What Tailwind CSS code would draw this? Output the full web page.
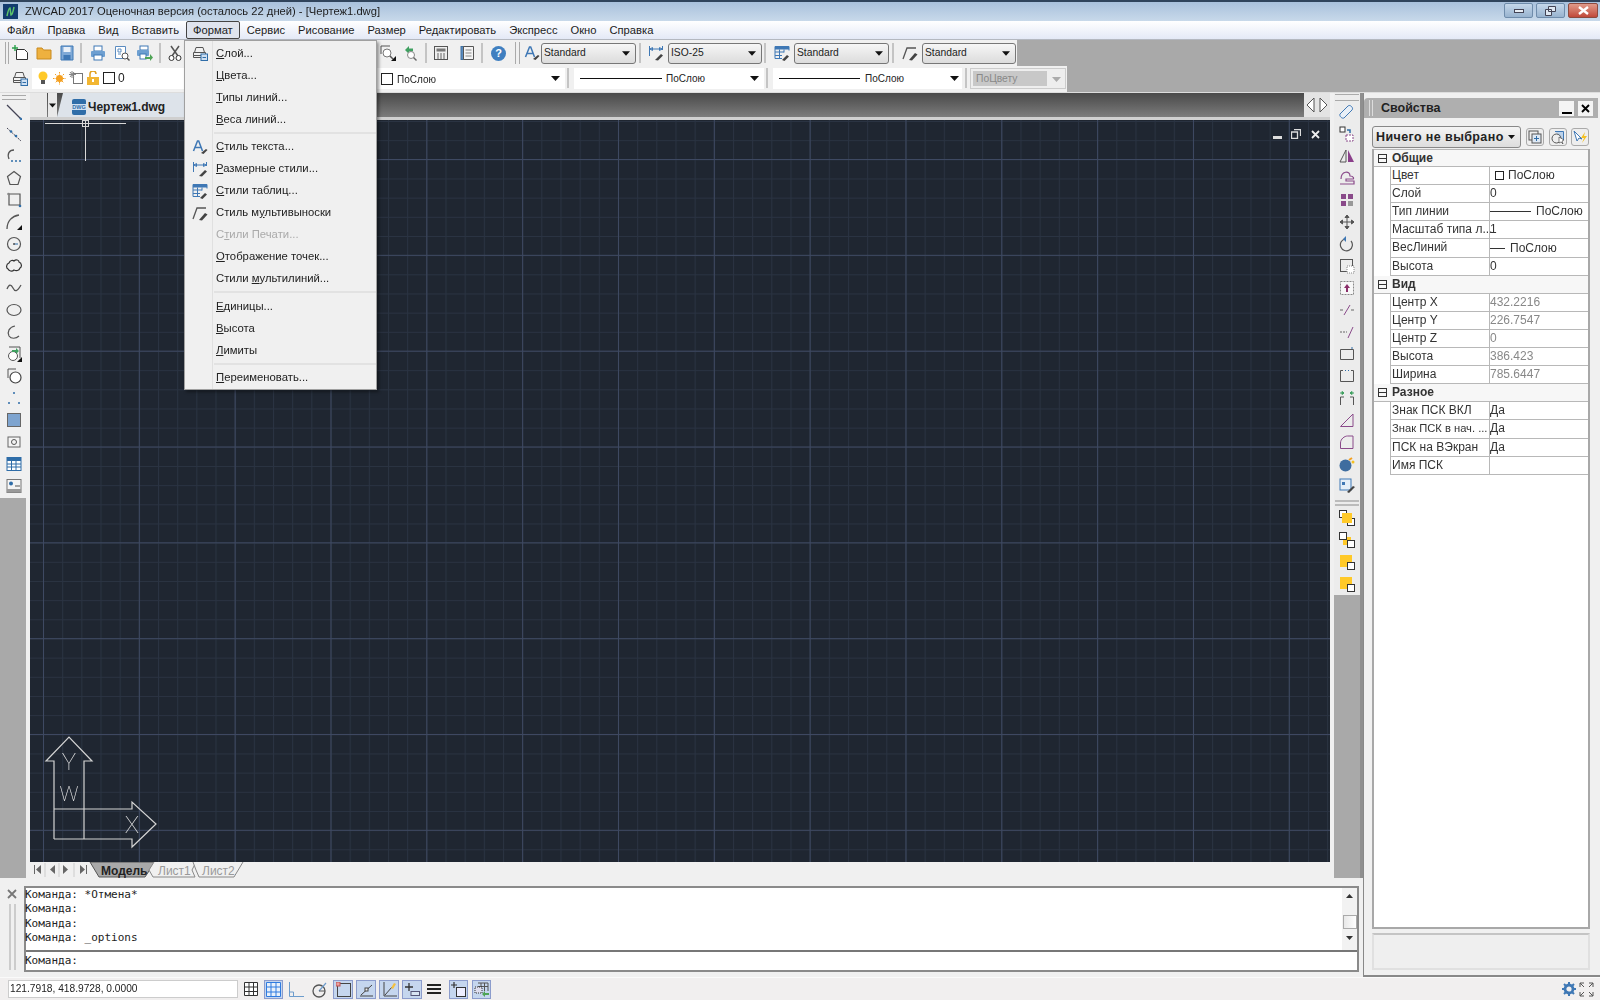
<!DOCTYPE html>
<html lang="ru">
<head>
<meta charset="UTF-8" />
<title>ZWCAD 2017</title>
<script src="https://cdn.jsdelivr.net/npm/@tailwindcss/browser@4"></script>
</head>
<body class="w-[1600px] h-[1000px] overflow-hidden bg-[#f0f0f0] font-['Liberation_Sans',sans-serif] text-[12px] text-[#222] blur-[0.3px]">

<svg class="hidden">
  <symbol id="layer" viewBox="0 0 16 16"><path d="M2.5 7.5 4 2.5h7l1.500 5M1.500 7.500h12v3h-12zM1.500 10.500h12v2h-12z" fill="#f2f2f2" stroke="#555"/><rect x="9" y="9" width="6.500" height="6.500" fill="#cfe0f2" stroke="#2f6da8"/><path d="M10.500 12.500h3.500" stroke="#2f6da8"/></symbol>
  <symbol id="txt" viewBox="0 0 16 16"><path d="M1.500 12 5.500 2h1.200L10.500 12M3 8.500h6" fill="none" stroke="#3f78b5" stroke-width="1.500"/><path d="m9 14 5-4 1.500 1-4 4z" fill="#444"/></symbol>
  <symbol id="dim" viewBox="0 0 16 16"><path d="M1.500 1v10M14.500 1v4M2 4h12M2 4l2.500-1.500v3zM14 4l-2.500-1.500v3z" fill="none" stroke="#3f78b5"/><path d="m7 15 6-6 2 1.500-5 5z" fill="#444"/></symbol>
  <symbol id="tbl" viewBox="0 0 16 16"><rect x="1" y="1.500" width="14" height="3" fill="#3f78b5"/><path d="M1 1.500h14v4M1 1.500v12h7M1 7h9M1 10.500h7M5.500 4.500v9M10 4.500v3" fill="none" stroke="#3f78b5"/><path d="m8 15 5-5 2 1.500-4.500 4.500z" fill="#444"/></symbol>
  <symbol id="mld" viewBox="0 0 16 16"><path d="M1 14 5 3h9" fill="none" stroke="#555" stroke-width="1.300"/><path d="m7 15 6-7 2.500 1.500-5.500 6z" fill="#444"/></symbol>
  <symbol id="down" viewBox="0 0 9 5"><path d="M0 0h9L4.500 5z" fill="#111"/></symbol>
  <symbol id="sq" viewBox="0 0 18 18"><rect x="2.500" y="2.500" width="11" height="11" fill="#ffc928" stroke="#ffc928"/><rect x="9.500" y="9.500" width="7" height="7" fill="#fff" stroke="#333"/></symbol>
</svg>

<!-- Title bar -->
<div class="h-[21px] border-t-2 border-[#30445c] bg-gradient-to-b from-[#a9c1dc] to-[#c8d9ea] flex items-center relative">
  <svg class="ml-[3px] w-[15px] h-[15px]" viewBox="0 0 15 15"><rect width="15" height="15" fill="#123c6e"/><path d="M4 12c1-5 2-8 3-8l1 7c1 0 2-3 3-8" fill="none" stroke="#5cc46a" stroke-width="1.500"/></svg>
  <span class="ml-[7px] text-[11.200px] text-[#1c1c1c]">ZWCAD 2017 Оценочная версия (осталось 22 дней) - [Чертеж1.dwg]</span>
  <div class="ml-auto mr-[2px] mb-[2px] flex gap-[3px]">
    <div class="w-[29px] h-[15px] rounded-[2px] border border-[#6f8cab] bg-gradient-to-b from-[#c5d7ea] to-[#98b3cf] flex items-center justify-center"><div class="w-[10px] h-[4px] bg-[#e8eef5] border border-[#445]"></div></div>
    <div class="w-[29px] h-[15px] rounded-[2px] border border-[#6f8cab] bg-gradient-to-b from-[#c5d7ea] to-[#98b3cf] flex items-center justify-center"><svg class="w-[11px] h-[10px]" viewBox="0 0 11 10"><path d="M3.500.500h7v5h-7zM.500 3.500h6v6h-6z" fill="#dfe8f2" stroke="#445"/></svg></div>
    <div class="w-[30px] h-[15px] rounded-[2px] border border-[#8c4a3e] bg-gradient-to-b from-[#e09a8a] to-[#c0483a] flex items-center justify-center"><svg class="w-[11px] h-[9px]" viewBox="0 0 11 9"><path d="m1 1 9 7M10 1 1 8" stroke="#fff" stroke-width="2.400"/></svg></div>
  </div>
</div>

<!-- Menu bar -->
<div class="h-[19px] bg-gradient-to-b from-white to-[#e4e9f6] flex items-center pl-[1px] text-[11.200px] text-[#1c1c1c] border-b border-[#b4b8c0]">
  <span class="px-[6px]">Файл</span>
  <span class="px-[6px] ml-[1px]">Правка</span>
  <span class="px-[6px] ml-[1px]">Вид</span>
  <span class="px-[6px] ml-[1px]">Вставить</span>
  <span class="px-[6px] ml-[1px] h-[18px] flex items-center rounded-[2px] border border-[#444] bg-[#dfe4ee]">Формат</span>
  <span class="px-[6px] ml-[1px]">Сервис</span>
  <span class="px-[6px] ml-[1px]">Рисование</span>
  <span class="px-[6px] ml-[1px]">Размер</span>
  <span class="px-[6px] ml-[1px]">Редактировать</span>
  <span class="px-[6px] ml-[1px]">Экспресс</span>
  <span class="px-[6px] ml-[1px]">Окно</span>
  <span class="px-[6px] ml-[1px]">Справка</span>
</div>

<!-- Toolbars -->
<div class="h-[53px] bg-[#a9a9a9] border-b border-[#ddd]">
  <div class="h-[26px] w-[1017px] bg-[#f0f0f0] flex items-center text-[10.300px]">
    <div class="ml-[5px] w-[4px] h-[22px] border-x border-[#aaa]"></div>
    <svg class="ml-[3px] w-[16px] h-[16px]" viewBox="0 0 16 16"><path d="M4.500 4.500h8l3 3v7h-11z" fill="#fff" stroke="#333"/><path d="M3 0v6M0 3h6" stroke="#2aa04a" stroke-width="1.400"/></svg>
    <svg class="ml-[8px] w-[16px] h-[16px]" viewBox="0 0 16 16"><path d="M1 3h5l1.500 2H15v9H1z" fill="#eeb13f" stroke="#c98a1f"/></svg>
    <svg class="ml-[8px] w-[14px] h-[16px]" viewBox="0 0 14 16"><path d="M1 1h12v14H1z" fill="#7fa9d6" stroke="#3f78b5"/><rect x="3.500" y="2" width="7" height="5" fill="#e9f0f8"/><rect x="3.500" y="10" width="7" height="5" fill="#3f78b5"/></svg>
    <div class="ml-[6px] w-[2px] h-[20px] bg-[#c4c4c4]"></div>
    <svg class="ml-[8px] w-[16px] h-[16px]" viewBox="0 0 16 16"><rect x="4" y="1" width="8" height="5" fill="#fff" stroke="#3f78b5"/><rect x="1" y="6" width="14" height="6" rx="1" fill="#6d9fd1"/><rect x="4" y="10" width="8" height="5" fill="#fff" stroke="#3f78b5"/></svg>
    <svg class="ml-[8px] w-[16px] h-[16px]" viewBox="0 0 16 16"><path d="M1.500 1.500h10v12h-10z" fill="#fff" stroke="#5b8cc0"/><path d="M4 4h3v3H4zM4 9h3" stroke="#5b8cc0" fill="none"/><circle cx="11" cy="11" r="3" fill="#fff" stroke="#555"/><path d="m13 13 2.500 2.500" stroke="#555" stroke-width="1.500"/></svg>
    <svg class="ml-[7px] w-[16px] h-[16px]" viewBox="0 0 16 16"><rect x="3" y="1" width="8" height="4" fill="#fff" stroke="#3f78b5"/><rect x="0" y="5" width="12" height="6" rx="1" fill="#6d9fd1"/><rect x="3" y="9" width="6" height="5" fill="#fff" stroke="#3f78b5"/><path d="M8 12h5V9l3 3.500-3 3.500v-2H8z" fill="#4fa456"/></svg>
    <div class="ml-[6px] w-[2px] h-[20px] bg-[#c4c4c4]"></div>
    <svg class="ml-[7px] w-[14px] h-[16px]" viewBox="0 0 14 16"><path d="m3 1 7 10M11 1 4 11" stroke="#555" stroke-width="1.500"/><circle cx="3.500" cy="13" r="2.500" fill="#fff" stroke="#333"/><circle cx="10.500" cy="13" r="2.500" fill="#fff" stroke="#333"/></svg>
    <svg class="ml-[198px] w-[16px] h-[16px]" viewBox="0 0 16 16"><path d="M1 9V1h9" fill="none" stroke="#555"/><circle cx="7" cy="8" r="4" fill="#fff" stroke="#777"/><path d="m10 11 3 3" stroke="#555" stroke-width="1.500"/><path d="M11 16h5v-5z" fill="#111"/></svg>
    <svg class="ml-[6px] w-[16px] h-[16px]" viewBox="0 0 16 16"><path d="m3 5 4-4v2.500h4v3H7V9z" fill="#3fa060"/><circle cx="9" cy="10" r="3.500" fill="#fff" stroke="#888"/><path d="m11.500 12.500 3 3" stroke="#666" stroke-width="1.400"/></svg>
    <div class="ml-[7px] w-[2px] h-[20px] bg-[#c4c4c4]"></div>
    <svg class="ml-[6px] w-[16px] h-[16px]" viewBox="0 0 16 16"><rect x="1.500" y="1.500" width="13" height="13" fill="#efefef" stroke="#555"/><rect x="3.500" y="3.500" width="9" height="3" fill="#777"/><path d="M4 9h8M4 11h8M4 13h8" stroke="#666" stroke-dasharray="2 1"/></svg>
    <svg class="ml-[11px] w-[15px] h-[16px]" viewBox="0 0 15 16"><rect x="1" y="1.500" width="10" height="13" fill="#5b8cc0" stroke="#3f6f9f"/><path d="M3.500 1.500h10v13h-10z" fill="#f4f4f4" stroke="#555"/><path d="M5.500 5h6M5.500 8h6M5.500 11h6" stroke="#888"/></svg>
    <div class="ml-[6px] w-[2px] h-[20px] bg-[#c4c4c4]"></div>
    <div class="ml-[8px] w-[15px] h-[15px] rounded-full bg-[#3f7fc0] text-white font-bold text-[11px] flex items-center justify-center">?</div>
    <div class="ml-[9px] w-[5px] h-[22px] border-x border-[#aaa]"></div>
    <svg class="ml-[4px] w-[16px] h-[16px]" viewBox="0 0 16 16"><use href="#txt"/></svg>
    <div class="ml-[1px] w-[95px] h-[21px] rounded-[3px] border border-[#777] bg-gradient-to-b from-[#f6f6f6] to-[#dcdcdc] flex items-center pl-[2px] pr-[5px] justify-between"><span>Standard</span><svg class="w-[8px] h-[5px]"><use href="#down"/></svg></div>
    <div class="ml-[3px] w-[2px] h-[20px] bg-[#c4c4c4]"></div>
    <svg class="ml-[7px] w-[16px] h-[16px]" viewBox="0 0 16 16"><use href="#dim"/></svg>
    <div class="ml-[4px] w-[94px] h-[21px] rounded-[3px] border border-[#777] bg-gradient-to-b from-[#f6f6f6] to-[#dcdcdc] flex items-center pl-[2px] pr-[5px] justify-between"><span>ISO-25</span><svg class="w-[8px] h-[5px]"><use href="#down"/></svg></div>
    <div class="ml-[2px] w-[2px] h-[20px] bg-[#c4c4c4]"></div>
    <svg class="ml-[8px] w-[16px] h-[16px]" viewBox="0 0 16 16"><use href="#tbl"/></svg>
    <div class="ml-[4px] w-[95px] h-[21px] rounded-[3px] border border-[#777] bg-gradient-to-b from-[#f6f6f6] to-[#dcdcdc] flex items-center pl-[2px] pr-[5px] justify-between"><span>Standard</span><svg class="w-[8px] h-[5px]"><use href="#down"/></svg></div>
    <div class="ml-[3px] w-[2px] h-[20px] bg-[#c4c4c4]"></div>
    <svg class="ml-[8px] w-[16px] h-[16px]" viewBox="0 0 16 16"><use href="#mld"/></svg>
    <div class="ml-[4px] w-[94px] h-[21px] rounded-[3px] border border-[#777] bg-gradient-to-b from-[#f6f6f6] to-[#dcdcdc] flex items-center pl-[2px] pr-[5px] justify-between"><span>Standard</span><svg class="w-[8px] h-[5px]"><use href="#down"/></svg></div>
  </div>
  <div class="h-[26px] pb-[2px] w-[1067px] bg-[#f0f0f0] flex items-center text-[10px]">
    <svg class="ml-[12px] w-[16px] h-[16px]" viewBox="0 0 16 16"><use href="#layer"/></svg>
    <div class="ml-[4px] w-[533px] h-[21px] bg-white flex items-center relative">
      <svg class="ml-[6px] w-[10px] h-[14px]" viewBox="0 0 10 14"><circle cx="5" cy="5" r="4.500" fill="#ffc928"/><rect x="3" y="9" width="4" height="4" fill="#555"/></svg>
      <svg class="ml-[5px] w-[13px] h-[13px]" viewBox="0 0 13 13"><circle cx="6.500" cy="6.500" r="3.500" fill="#f4a020"/><path d="M6.500 0v13M0 6.500h13M2 2l9 9M11 2l-9 9" stroke="#f4a020" stroke-dasharray="1.500 1"/></svg>
      <svg class="ml-[3px] w-[15px] h-[14px]" viewBox="0 0 15 14"><rect x="4.500" y="2.500" width="9" height="10" fill="#fff" stroke="#777"/><path d="M3 0v7M0 3.500h7M1 1l4 5M5 1 1 6" stroke="#888"/></svg>
      <svg class="ml-[3px] w-[12px] h-[14px]" viewBox="0 0 12 14"><path d="M3 6V3a3 3 0 0 1 6 0" fill="none" stroke="#e0a020" stroke-width="1.500"/><rect y="6" width="12" height="8" fill="#f2b632"/><rect x="5" y="8" width="2" height="3" fill="#fff"/></svg>
      <div class="ml-[4px] w-[12px] h-[12px] bg-white border border-[#222]"></div>
      <span class="ml-[3px] text-[12px]">0</span>
      <div class="absolute left-[349px] top-[4px] flex items-center">
        <div class="w-[12px] h-[12px] bg-white border border-[#222]"></div>
        <span class="ml-[4px]">ПоСлою</span>
      </div>
      <svg class="absolute right-[5px] top-[8px] w-[9px] h-[5px]"><use href="#down"/></svg>
    </div>
    <div class="ml-[2px] w-[2px] h-[20px] bg-[#c4c4c4]"></div>
    <div class="ml-[5px] w-[190px] h-[21px] bg-white flex items-center pl-[6px] relative">
      <div class="w-[82px] h-[1px] bg-[#111]"></div><span class="ml-[4px]">ПоСлою</span>
      <svg class="absolute right-[5px] top-[8px] w-[9px] h-[5px]"><use href="#down"/></svg>
    </div>
    <div class="ml-[2px] w-[2px] h-[20px] bg-[#c4c4c4]"></div>
    <div class="ml-[5px] w-[189px] h-[21px] bg-white flex items-center pl-[6px] relative">
      <div class="w-[81px] h-[1px] bg-[#111]"></div><span class="ml-[5px]">ПоСлою</span>
      <svg class="absolute right-[3px] top-[8px] w-[9px] h-[5px]"><use href="#down"/></svg>
    </div>
    <div class="ml-[3px] w-[2px] h-[20px] bg-[#c4c4c4]"></div>
    <div class="ml-[3px] w-[96px] h-[21px] bg-[#eee] border border-[#ccc] flex items-center relative">
      <div class="ml-[2px] w-[74px] h-[15px] bg-[#c8c8c8] pl-[3px] leading-[15px] text-[10.300px] text-[#888]">ПоЦвету</div>
      <svg class="absolute right-[4px] top-[8px] w-[9px] h-[5px] opacity-30"><use href="#down"/></svg>
    </div>
  </div>
</div>

<div class="flex h-[884px]">
  <div class="w-[1363px] flex flex-col">
    <div class="flex h-[785px] bg-[#f0f0f0]">

      <!-- Left draw toolbar -->
      <div class="w-[30px] flex flex-col">
        <div class="w-[27px] h-[405px] bg-[#f0f0f0] flex flex-col items-center">
          <div class="mt-[2px] w-[24px] h-[5px] border-y border-[#aaa] mb-[4px]"></div>
          <div class="flex flex-col items-center gap-[6px]">
            <svg class="w-[16px] h-[16px]" viewBox="0 0 16 16"><path d="m1 1 14 14" stroke="#445" stroke-width="1.200"/><path d="m14 14 2 2" stroke="#2f6da8" stroke-width="2"/></svg>
            <svg class="w-[16px] h-[16px]" viewBox="0 0 16 16"><path d="m1 2 14 13" stroke="#445" stroke-dasharray="2 1"/><circle cx="5" cy="5.500" r="1.300" fill="#2f6da8"/><circle cx="10" cy="10" r="1.300" fill="#2f6da8"/></svg>
            <svg class="w-[16px] h-[16px]" viewBox="0 0 16 16"><path d="M8 2C3 2 1 6 3 11" fill="none" stroke="#555" stroke-width="1.300"/><path d="M5 13h10" stroke="#2f6da8" stroke-dasharray="2 2" stroke-width="1.500"/></svg>
            <svg class="w-[16px] h-[16px]" viewBox="0 0 16 16"><path d="m8 1.500 6.500 5-2.500 8H4l-2.500-8z" fill="none" stroke="#555" stroke-width="1.200"/></svg>
            <svg class="w-[16px] h-[16px]" viewBox="0 0 16 16"><path d="M3 2h11v11H3z" fill="none" stroke="#555" stroke-width="1.200"/><circle cx="2.500" cy="2" r="1.300" fill="#888"/><circle cx="14" cy="14" r="1.300" fill="#2f6da8"/></svg>
            <svg class="w-[16px] h-[16px]" viewBox="0 0 16 16"><path d="M1 15C1 7 6 2 13 1" fill="none" stroke="#555" stroke-width="1.300"/><path d="M16 11v5h-5z" fill="#111"/></svg>
            <svg class="w-[16px] h-[16px]" viewBox="0 0 16 16"><circle cx="8" cy="8" r="6.500" fill="none" stroke="#555" stroke-width="1.200"/><path d="M8 8h4" stroke="#2f6da8"/><circle cx="8" cy="8" r="1" fill="#555"/></svg>
            <svg class="w-[16px] h-[16px]" viewBox="0 0 16 16"><path d="M3 5c1-3 4-3 5-2 2-2 5-1 5 1 3 1 3 5 1 6-1 3-4 3-6 2-2 2-5 1-6-1-2-1-2-5 1-6z" fill="none" stroke="#333" stroke-width="1.200"/></svg>
            <svg class="w-[16px] h-[16px]" viewBox="0 0 16 16"><path d="M1 9c2-5 4-5 6-1s4 4 8-3" fill="none" stroke="#555" stroke-width="1.300"/></svg>
            <svg class="w-[16px] h-[16px]" viewBox="0 0 16 16"><ellipse cx="8" cy="8" rx="7" ry="5.500" fill="none" stroke="#555" stroke-width="1.200"/></svg>
            <svg class="w-[16px] h-[16px]" viewBox="0 0 16 16"><path d="M9 2C3 3 1 8 3 12c2 3 7 3 10 0" fill="none" stroke="#555" stroke-width="1.200"/></svg>
            <svg class="w-[16px] h-[16px]" viewBox="0 0 16 16"><path d="M3 1h11v11" fill="none" stroke="#555"/><circle cx="7" cy="10" r="4.500" fill="#fff" stroke="#555"/><path d="M6 4h4V2l3 3-3 3V6H6z" fill="#3fa060"/><path d="M16 11v5h-5z" fill="#111"/></svg>
            <svg class="w-[16px] h-[16px]" viewBox="0 0 16 16"><path d="M2 1h8M2 1v9" fill="none" stroke="#555"/><circle cx="9.500" cy="9.500" r="5.500" fill="#fff" stroke="#444" stroke-width="1.200"/></svg>
            <svg class="w-[16px] h-[16px]" viewBox="0 0 16 16"><circle cx="8" cy="3" r="1" fill="#2f6da8"/><circle cx="3" cy="13" r="1" fill="#2f6da8"/><circle cx="13" cy="13" r="1" fill="#2f6da8"/></svg>
            <svg class="w-[16px] h-[16px]" viewBox="0 0 16 16"><rect x="1.500" y="1.500" width="13" height="13" fill="#7ea4cf" stroke="#666"/></svg>
            <svg class="w-[16px] h-[16px]" viewBox="0 0 16 16"><rect x="2" y="3" width="12" height="10" fill="#f4f4f4" stroke="#666"/><circle cx="8" cy="8" r="2.500" fill="none" stroke="#555"/></svg>
            <svg class="w-[16px] h-[16px]" viewBox="0 0 16 16"><rect x="1" y="1.500" width="14" height="13" fill="#fff" stroke="#2f6da8"/><rect x="1" y="1.500" width="14" height="3.500" fill="#2f6da8"/><path d="M1 8h14M1 11h14M5.500 5v9M10 5v9" stroke="#2f6da8"/></svg>
            <svg class="w-[16px] h-[16px]" viewBox="0 0 16 16"><rect x="1" y="1.500" width="14" height="13" fill="#f4f4f4" stroke="#777"/><path d="M1 11h14v3.500H1z" fill="#999"/><circle cx="5" cy="5.500" r="2" fill="#2f6da8"/><path d="M9 8h5" stroke="#555"/></svg>
          </div>
        </div>
        <div class="w-[26px] flex-1 bg-[#a9a9a9]"></div>
      </div>

      <!-- Drawing area -->
      <div class="w-[1300px] flex flex-col">
        <div class="h-[27px] flex bg-gradient-to-b from-[#4a4a4a] to-[#7c7c7c] border-b-[3px] border-[#cfcfcf]">
          <div class="w-[17px] bg-[#e9e9e9]"></div>
          <div class="ml-[1px] w-[9px] bg-[#e9e9e9] flex items-center justify-center"><svg class="w-[7px] h-[5px]"><use href="#down"/></svg></div>
          <div class="w-[127px] pt-[3px] bg-[#dde3ea] flex items-center [clip-path:polygon(6px_0,100%_0,100%_100%,0_100%)]">
            <svg class="ml-[15px] w-[14px] h-[16px]" viewBox="0 0 14 16"><rect width="14" height="16" rx="2" fill="#2f6da8"/><rect y="5" width="14" height="6" fill="#cfe0f2"/><text x="7" y="10.200" font-size="5.500" font-weight="700" fill="#2f6da8" text-anchor="middle">DWG</text></svg>
            <span class="ml-[2px] font-bold text-[12px]">Чертеж1.dwg</span>
          </div>
          <div class="ml-auto w-[26px] bg-[#e4e4e4] flex items-center justify-around">
            <svg class="w-[9px] h-[16px]" viewBox="0 0 9 16"><path d="M8 1 1 8l7 7z" fill="#fff" stroke="#555"/></svg>
            <svg class="w-[9px] h-[16px]" viewBox="0 0 9 16"><path d="m1 1 7 7-7 7z" fill="#fff" stroke="#555"/></svg>
          </div>
        </div>
        <div class="relative h-[742px] bg-[#1f2631] overflow-hidden">
          <svg class="absolute inset-0 w-full h-full">
            <defs>
              <pattern id="minor" width="19.166" height="19.166" patternUnits="userSpaceOnUse" x="13" y="1">
                <path d="M.500 0V19.166M0 .500H19.166" stroke="#2a3342" stroke-width="1"/>
              </pattern>
              <pattern id="major" width="95.83" height="95.83" patternUnits="userSpaceOnUse" x="13" y="39">
                <path d="M.500 0V95.830M0 .500H95.830" stroke="#3e4962" stroke-width="1"/>
              </pattern>
            </defs>
            <rect width="100%" height="100%" fill="url(#minor)"/>
            <rect width="100%" height="100%" fill="url(#major)"/>
            <!-- crosshair -->
            <path d="M15 3.500H96M55.500 0V41" stroke="#d8d8d8"/>
            <rect x="52.500" y="0.500" width="6" height="6" fill="none" stroke="#d8d8d8"/>
            <!-- ucs -->
            <g fill="none" stroke="#d4d4d4" stroke-width="1.200">
              <path d="M24 719V641H16L39 617l23 24H54V719"/>
              <path d="M24 689H102V682L126 704 102 727V719H24"/>
            </g>
            <g fill="#e4e4e4" font-family="Roboto" font-weight="100" text-anchor="middle">
              <text x="39" y="650" font-size="24">Y</text>
              <text x="39" y="681" font-size="21">W</text>
              <text x="102" y="713" font-size="24">X</text>
            </g>
          </svg>
          <div class="absolute right-[10px] top-[9px] flex items-center gap-[9px]">
            <div class="w-[9px] h-[3px] mt-[6px] bg-[#ddd]"></div>
            <svg class="w-[10px] h-[10px]" viewBox="0 0 10 10"><path d="M3 .500h6.500V7M.500 3h6v6.500h-6z" fill="none" stroke="#ddd" stroke-width="1.300"/></svg>
            <svg class="ml-[1px] w-[9px] h-[9px]" viewBox="0 0 9 9"><path d="m1 1 7 7M8 1 1 8" stroke="#eee" stroke-width="1.800"/></svg>
          </div>
        </div>
        <div class="h-[16px] bg-[#f0f0f0] flex">
          <svg class="w-[240px] h-[16px]" viewBox="0 0 240 16">
            <g fill="#666"><path d="M4 3h1v9H4zM11 3v9L6 7.500z"/><path d="M25 3v9l-5-4.500z"/><path d="M33 3v9l5-4.500z"/><path d="M50 3v9l5-4.500zM56 3h1v9h-1z"/></g>
            <path d="M15 1v14M29 1v14M44 1v14" stroke="#ccc"/>
            <path d="M60 0h65l-10 15H69z" fill="#a9a9a9" stroke="#555"/>
            <text x="71" y="12.500" font-size="12" font-weight="700" fill="#222">Модель</text>
            <path d="M124 0l-5 8 4 7h42l-3-7 4-8" fill="#f0f0f0" stroke="#888"/>
            <text x="128" y="12.500" font-size="12" fill="#999">Лист1</text>
            <path d="M163 0l3 8 3 7h35l9-15" fill="#f0f0f0" stroke="#888"/>
            <text x="172" y="12.500" font-size="12" fill="#999">Лист2</text>
          </svg>
        </div>
      </div>

      <!-- Right edit toolbar -->
      <div class="ml-[4px] w-[26px] flex flex-col bg-[#ececec]">
        <div class="mt-[1px] mx-[1px] h-[7px] border-y border-[#aaa]"></div>
        <div class="flex flex-col items-center gap-[6px] mt-[3px]">
          <svg class="w-[16px] h-[16px]" viewBox="0 0 16 16"><path d="m1 10 8-8c2-2 6 2 4 4l-8 8c-2 1-5-2-4-4z" fill="#e8eff7" stroke="#3f78b5"/></svg>
          <svg class="w-[16px] h-[16px]" viewBox="0 0 16 16"><rect x="1" y="1" width="5" height="5" fill="#fff" stroke="#333"/><rect x="7" y="9" width="7" height="6" fill="#fff" stroke="#8a4a8a" stroke-dasharray="2 1"/><path d="M8 4h3v3" fill="none" stroke="#2f6da8" stroke-width="1.500"/></svg>
          <svg class="w-[16px] h-[16px]" viewBox="0 0 16 16"><path d="M7 2 1 14h6z" fill="none" stroke="#555"/><path d="M9 2v12h6z" fill="#8a3f8a"/></svg>
          <svg class="w-[16px] h-[16px]" viewBox="0 0 16 16"><path d="M2 9c0-8 9-9 9-3 4 0 4 3 3 3H7v2h8v3H1" fill="none" stroke="#8a4a8a" stroke-width="1.200"/></svg>
          <svg class="w-[16px] h-[16px]" viewBox="0 0 16 16"><path d="M2 2h5v5H2zM9 2h5v5H9zM2 9h5v5H2z" fill="#8a4a8a"/><path d="M9 9h5v5H9z" fill="#999"/></svg>
          <svg class="w-[16px] h-[16px]" viewBox="0 0 16 16"><path d="M8 1v14M1 8h14M8 1 6 3.500h4zM8 15l-2-2.500h4zM1 8l2.500-2v4zM15 8l-2.500-2v4z" fill="#555" stroke="#555"/></svg>
          <svg class="w-[16px] h-[16px]" viewBox="0 0 16 16"><path d="M12 5a6 6 0 1 1-6-2" fill="none" stroke="#555" stroke-width="1.200"/><path d="m7 0-3 3 3 3z" fill="#3f78b5"/></svg>
          <svg class="w-[16px] h-[16px]" viewBox="0 0 16 16"><rect x="1.500" y="1.500" width="12" height="12" fill="none" stroke="#555"/><rect x="8" y="8" width="7" height="7" fill="#fff" stroke="#888" stroke-dasharray="1 1"/></svg>
          <svg class="w-[16px] h-[16px]" viewBox="0 0 16 16"><rect x="1.500" y="1.500" width="13" height="13" fill="#f7f7f7" stroke="#888" stroke-dasharray="2 1"/><path d="M8 4 5 8h2v4h2V8h2z" fill="#8a2f6a"/></svg>
          <svg class="w-[16px] h-[16px]" viewBox="0 0 16 16"><path d="M1 8h3M12 8h3" stroke="#666"/><path d="m5 13 6-10" stroke="#8a4a8a"/></svg>
          <svg class="w-[16px] h-[16px]" viewBox="0 0 16 16"><path d="M1 8h7" stroke="#666" stroke-dasharray="2 1"/><path d="m9 14 5-11" stroke="#8a4a8a"/></svg>
          <svg class="w-[16px] h-[16px]" viewBox="0 0 16 16"><path d="M1.500 3.500h13v10h-13z" fill="none" stroke="#555"/><path d="M12 2h2" stroke="#2f6da8"/></svg>
          <svg class="w-[16px] h-[16px]" viewBox="0 0 16 16"><path d="M4 2.500H1.500v11h13v-11H12" fill="none" stroke="#555"/><path d="M6 2.500h1M9 2.500h1" stroke="#2f6da8"/></svg>
          <svg class="w-[16px] h-[16px]" viewBox="0 0 16 16"><path d="M1.500 15V7M14.500 15V7M1.500 7H5M11 7h3.500" fill="none" stroke="#555"/><path d="M1 3h4M5 3 3 1.500v3zM15 3h-4M11 3l2-1.500v3z" fill="#3fa060" stroke="#3fa060"/></svg>
          <svg class="w-[16px] h-[16px]" viewBox="0 0 16 16"><path d="M1.500 14.500 14 2v12.500z" fill="none" stroke="#8a4a8a"/></svg>
          <svg class="w-[16px] h-[16px]" viewBox="0 0 16 16"><path d="M1.500 14.500V9c0-4 4-7 7-7h5.500v12.500z" fill="none" stroke="#8a4a8a"/></svg>
          <svg class="w-[16px] h-[16px]" viewBox="0 0 16 16"><circle cx="6.500" cy="9.500" r="6" fill="#3f6d9f"/><path d="m10 4 3-2" stroke="#f4a020" stroke-width="2"/><circle cx="14" cy="6" r="1.500" fill="#f4c020"/></svg>
          <svg class="w-[16px] h-[16px]" viewBox="0 0 16 16"><rect x="1" y="1" width="11" height="11" fill="#e4eef8" stroke="#3f78b5"/><path d="M3 4h3v3H3z" fill="#3f78b5"/><path d="m8 14 6-6 2 1-6 6z" fill="#444"/></svg>
        </div>
        <div class="mt-[6px] mx-[1px] h-[6px] border-y-2 border-[#bbb]"></div>
        <div class="flex flex-col items-center gap-[4px] mt-[3px]">
          <svg class="w-[18px] h-[18px]" viewBox="0 0 18 18"><rect x="1.500" y="1.500" width="7" height="7" fill="#fff" stroke="#333"/><rect x="9.500" y="9.500" width="7" height="7" fill="#fff" stroke="#333"/><rect x="4" y="4" width="10" height="10" fill="#ffc928"/></svg>
          <svg class="w-[18px] h-[18px]" viewBox="0 0 18 18"><rect x="5" y="6" width="8" height="8" fill="#ffc928"/><rect x="1.500" y="1.500" width="7" height="7" fill="#fff" stroke="#333"/><rect x="9.500" y="9.500" width="7" height="7" fill="#fff" stroke="#333"/></svg>
          <svg class="w-[18px] h-[18px]" viewBox="0 0 18 18"><use href="#sq"/></svg>
          <svg class="w-[18px] h-[18px]" viewBox="0 0 18 18"><use href="#sq"/></svg>
        </div>
        <div class="mt-[2px] flex-1 bg-[#a9a9a9]"></div>
      </div>
      <div class="w-[3px] bg-[#8f8f8f]"></div>
    </div>

    <!-- Command window -->
    <div class="h-[99px] flex bg-[#f0f0f0]">
      <div class="w-[24px] flex flex-col items-center pt-[11px]">
        <svg class="w-[10px] h-[10px]" viewBox="0 0 10 10"><path d="m1 1 8 8M9 1 1 9" stroke="#777" stroke-width="1.800"/></svg>
        <div class="mt-[5px] w-[7px] h-[66px] border-x-2 border-[#ccc]"></div>
      </div>
      <div class="mt-[8px] w-[1335px] h-[86px] border-2 border-[#8a8a8a] bg-white flex flex-col font-['DejaVu_Sans_Mono',monospace] text-[11px] text-[#222]">
        <div class="h-[66px] flex border-b-2 border-[#777]">
          <div class="flex-1 -ml-[1px] leading-[14.400px] whitespace-pre">Команда: *Отмена*
Команда:
Команда:
Команда: _options</div>
          <div class="w-[15px] bg-[#f2f2f2] flex flex-col items-center">
            <svg class="mt-[6px] w-[7px] h-[4px]" viewBox="0 0 7 4"><path d="M0 4h7L3.500 0z" fill="#333"/></svg>
            <div class="mt-[17px] w-[14px] h-[14px] border border-[#aaa] bg-gradient-to-r from-[#e8e8e8] to-white"></div>
            <svg class="mt-[7px] w-[7px] h-[4px]" viewBox="0 0 7 4"><path d="M0 0h7L3.500 4z" fill="#333"/></svg>
          </div>
        </div>
        <div class="flex-1 -ml-[1px] leading-[18px]">Команда:</div>
      </div>
    </div>
  </div>

  <!-- Properties palette -->
  <div class="flex-1 bg-[#f0f0f0] border-l-[1px] border-[#888] border-b-[2px] border-b-[#888] pt-[5px]">
    <div class="w-[234px]">
      <div class="h-[20px] rounded-tl-[4px] bg-[#afafaf] flex items-center">
        <div class="ml-[5px] w-[4px] h-[16px] border-x border-[#ddd]"></div>
        <span class="ml-[8px] font-bold text-[12.500px] text-[#222]">Свойства</span>
        <div class="ml-auto w-[15px] h-[15px] bg-[#f4f4f4] flex items-end justify-center pb-[2px]"><div class="w-[10px] h-[2px] bg-black"></div></div>
        <div class="ml-[4px] mr-[5px] w-[15px] h-[15px] bg-[#f4f4f4] flex items-center justify-center"><svg class="w-[9px] h-[9px]" viewBox="0 0 9 9"><path d="m1 1 7 7M8 1 1 8" stroke="#000" stroke-width="1.900"/></svg></div>
      </div>
      <div class="h-[32px] flex items-end pl-[8px] pb-[2px]">
        <div class="w-[149px] h-[22px] rounded-[3px] border border-[#888] bg-gradient-to-b from-[#f4f4f4] to-[#ddd] flex items-center justify-between pl-[3px] pr-[5px] font-bold text-[12.500px] tracking-[0.400px] text-[#222] whitespace-nowrap"><span>Ничего не выбрано</span><svg class="w-[7px] h-[4px] shrink-0"><use href="#down"/></svg></div>
        <div class="ml-[5px] w-[18px] h-[18px] mb-[2px] rounded-[3px] border border-[#aaa] bg-[#eee] flex items-center justify-center"><svg class="w-[14px] h-[14px]" viewBox="0 0 14 14"><rect x="1" y="1" width="9" height="9" fill="none" stroke="#555"/><rect x="4" y="4" width="9" height="9" fill="#dde8f4" stroke="#555"/><path d="M8.500 6v5M6 8.500h5" stroke="#2f6da8"/></svg></div>
        <div class="ml-[5px] w-[18px] h-[18px] mb-[2px] rounded-[3px] border border-[#aaa] bg-[#eee] flex items-center justify-center"><svg class="w-[14px] h-[14px]" viewBox="0 0 14 14"><path d="M4 1.500h8.500V10" fill="#bcd2ea" stroke="#3f78b5"/><circle cx="5.500" cy="8.500" r="4.500" fill="none" stroke="#555"/><path d="m8 7 5 3-2 1 1 3-2-2-2 1z" fill="#fff" stroke="#333" stroke-width=".6"/></svg></div>
        <div class="ml-[4px] w-[18px] h-[18px] mb-[2px] rounded-[3px] border border-[#aaa] bg-[#eee] flex items-center justify-center"><svg class="w-[14px] h-[14px]" viewBox="0 0 14 14"><path d="m1 1 3 10 2-3 3 1z" fill="#fff" stroke="#3f78b5"/><path d="m12 2-4 6h3l-2 5 5-7h-3z" fill="#f4c020"/></svg></div>
      </div>
      <div class="ml-[8px] w-[218px] h-[780px] bg-white border-2 border-t-0 border-[#a8a8a8]">
        <div class="text-[12px] text-[#333] leading-[17px]">
          <div class="h-[18.100px] flex items-center font-bold border-y border-[#b8b8b8] bg-[#f7f7f7] -mt-[1px]"><div class="w-[16px] flex justify-center"><div class="w-[9px] h-[9px] border border-[#333] flex items-center"><div class="w-full h-[1px] bg-[#333]"></div></div></div><span class="pl-[2px]">Общие</span></div>
          <div class="ml-[16px] h-[18.100px] flex border-b border-l border-[#b8b8b8]"><div class="w-[99px] pl-[1px] border-r border-[#b8b8b8] whitespace-nowrap overflow-hidden">Цвет</div><div class="flex items-center pl-[5px]"><div class="w-[9px] h-[9px] border border-[#222]"></div><span class="ml-[4px]">ПоСлою</span></div></div>
          <div class="ml-[16px] h-[18.100px] flex border-b border-l border-[#b8b8b8]"><div class="w-[99px] pl-[1px] border-r border-[#b8b8b8]">Слой</div><div>0</div></div>
          <div class="ml-[16px] h-[18.100px] flex border-b border-l border-[#b8b8b8]"><div class="w-[99px] pl-[1px] border-r border-[#b8b8b8]">Тип линии</div><div class="flex items-center"><div class="w-[41px] h-[1px] bg-[#333]"></div><span class="ml-[5px]">ПоСлою</span></div></div>
          <div class="ml-[16px] h-[18.100px] flex border-b border-l border-[#b8b8b8]"><div class="w-[99px] pl-[1px] border-r border-[#b8b8b8] whitespace-nowrap">Масштаб типа л...</div><div>1</div></div>
          <div class="ml-[16px] h-[18.100px] flex border-b border-l border-[#b8b8b8]"><div class="w-[99px] pl-[1px] border-r border-[#b8b8b8]">ВесЛиний</div><div class="flex items-center"><div class="w-[15px] h-[1px] bg-[#333]"></div><span class="ml-[5px]">ПоСлою</span></div></div>
          <div class="ml-[16px] h-[18.100px] flex border-b border-l border-[#b8b8b8]"><div class="w-[99px] pl-[1px] border-r border-[#b8b8b8]">Высота</div><div>0</div></div>
          <div class="h-[18.100px] flex items-center font-bold border-b border-[#b8b8b8] bg-[#f7f7f7]"><div class="w-[16px] flex justify-center"><div class="w-[9px] h-[9px] border border-[#333] flex items-center"><div class="w-full h-[1px] bg-[#333]"></div></div></div><span class="pl-[2px]">Вид</span></div>
          <div class="ml-[16px] h-[18.100px] flex border-b border-l border-[#b8b8b8]"><div class="w-[99px] pl-[1px] border-r border-[#b8b8b8]">Центр X</div><div class="text-[#888]">432.2216</div></div>
          <div class="ml-[16px] h-[18.100px] flex border-b border-l border-[#b8b8b8]"><div class="w-[99px] pl-[1px] border-r border-[#b8b8b8]">Центр Y</div><div class="text-[#888]">226.7547</div></div>
          <div class="ml-[16px] h-[18.100px] flex border-b border-l border-[#b8b8b8]"><div class="w-[99px] pl-[1px] border-r border-[#b8b8b8]">Центр Z</div><div class="text-[#888]">0</div></div>
          <div class="ml-[16px] h-[18.100px] flex border-b border-l border-[#b8b8b8]"><div class="w-[99px] pl-[1px] border-r border-[#b8b8b8]">Высота</div><div class="text-[#888]">386.423</div></div>
          <div class="ml-[16px] h-[18.100px] flex border-b border-l border-[#b8b8b8]"><div class="w-[99px] pl-[1px] border-r border-[#b8b8b8]">Ширина</div><div class="text-[#888]">785.6447</div></div>
          <div class="h-[18.100px] flex items-center font-bold border-b border-[#b8b8b8] bg-[#f7f7f7]"><div class="w-[16px] flex justify-center"><div class="w-[9px] h-[9px] border border-[#333] flex items-center"><div class="w-full h-[1px] bg-[#333]"></div></div></div><span class="pl-[2px]">Разное</span></div>
          <div class="ml-[16px] h-[18.100px] flex border-b border-l border-[#b8b8b8]"><div class="w-[99px] pl-[1px] border-r border-[#b8b8b8]">Знак ПСК ВКЛ</div><div>Да</div></div>
          <div class="ml-[16px] h-[18.100px] flex border-b border-l border-[#b8b8b8]"><div class="w-[99px] pl-[1px] border-r border-[#b8b8b8] whitespace-nowrap text-[11.200px]">Знак ПСК в нач. ...</div><div>Да</div></div>
          <div class="ml-[16px] h-[18.100px] flex border-b border-l border-[#b8b8b8]"><div class="w-[99px] pl-[1px] border-r border-[#b8b8b8] whitespace-nowrap">ПСК на ВЭкран</div><div>Да</div></div>
          <div class="ml-[16px] h-[18.100px] flex border-b border-l border-[#b8b8b8]"><div class="w-[99px] pl-[1px] border-r border-[#b8b8b8]">Имя ПСК</div><div></div></div>
        </div>
      </div>
      <div class="ml-[8px] mt-[4px] w-[218px] h-[37px] border-2 border-[#e0e0e0] border-t-[#c4c4c4] bg-[#efefef]"></div>
    </div>
  </div>
</div>

<!-- Status bar -->
<div class="h-[23px] bg-[#f1efef] border-t border-[#fafafa] flex items-center">
  <div class="ml-[8px] w-[230px] h-[18px] bg-white border border-[#ccc] pl-[1px] leading-[16px] text-[10.200px]">121.7918, 418.9728, 0.0000</div>
  <svg class="ml-[6px] w-[14px] h-[14px]" viewBox="0 0 14 14"><path d="M.500.500h13v13H.500zM5 .500v13M9.500 .500v13M.500 5h13M.500 9.500h13" fill="#fff" stroke="#333"/></svg>
  <div class="ml-[6px] w-[19px] h-[19px] bg-[#c5d6ee] border border-[#8c9ccc] flex items-center justify-center"><svg class="w-[15px] h-[15px]" viewBox="0 0 15 15"><path d="M.500.500h14v14H.500zM5 .500v14M10 .500v14M.500 5h14M.500 10h14" fill="#e8f0fa" stroke="#2f7be0"/></svg></div>
  <svg class="ml-[5px] w-[17px] h-[17px]" viewBox="0 0 17 17"><path d="M1.500 1v14.500H16M1.500 11h4v4.500" fill="none" stroke="#6d9ccc"/></svg>
  <svg class="ml-[6px] w-[17px] h-[17px]" viewBox="0 0 17 17"><circle cx="8" cy="10" r="6" fill="none" stroke="#555" stroke-width="1.300"/><path d="M8 10 15 2" stroke="#6d9ccc" stroke-width="1.200"/><path d="M8 10h6" stroke="#555"/></svg>
  <div class="ml-[5px] w-[20px] h-[19px] bg-[#c5d6ee] border border-[#8c9ccc] flex items-center justify-center"><svg class="w-[15px] h-[15px]" viewBox="0 0 15 15"><rect x="1.500" y="1.500" width="13" height="13" fill="none" stroke="#444"/><rect x="0" y="0" width="4" height="4" fill="#e8a0a0" stroke="#c05050"/></svg></div>
  <div class="ml-[3px] w-[20px] h-[19px] bg-[#c5d6ee] border border-[#8c9ccc] flex items-center justify-center"><svg class="w-[15px] h-[15px]" viewBox="0 0 15 15"><path d="M1 14h13M2 13 13 3" fill="none" stroke="#444"/><rect x="6" y="6" width="3" height="3" fill="#eee" stroke="#444"/></svg></div>
  <div class="ml-[3px] w-[20px] h-[19px] bg-[#c5d6ee] border border-[#8c9ccc] flex items-center justify-center"><svg class="w-[15px] h-[15px]" viewBox="0 0 15 15"><path d="M2 0v14h13M3 13 10 5" fill="none" stroke="#444"/><path d="m9 6 3-5 2 1-3 5z" fill="#f4c040"/></svg></div>
  <div class="ml-[3px] w-[20px] h-[19px] bg-[#c5d6ee] border border-[#8c9ccc] flex items-center justify-center"><svg class="w-[15px] h-[15px]" viewBox="0 0 15 15"><path d="M4 1v8M0 5h8" stroke="#333" stroke-width="1.300"/><rect x="6" y="9.500" width="8.500" height="4" fill="#d8e4f2" stroke="#557"/></svg></div>
  <div class="ml-[5px] w-[14px] flex flex-col gap-[2px]"><div class="h-[2px] bg-[#222]"></div><div class="h-[2px] bg-[#222]"></div><div class="h-[2px] bg-[#222]"></div></div>
  <div class="ml-[8px] w-[19px] h-[19px] bg-[#c5d6ee] border border-[#8c9ccc] flex items-center justify-center"><svg class="w-[15px] h-[15px]" viewBox="0 0 15 15"><path d="M3 0v6M0 3h6" stroke="#333" stroke-width="1.200"/><rect x="5.500" y="5.500" width="9" height="9" fill="#eef" stroke="#333"/></svg></div>
  <div class="ml-[4px] w-[19px] h-[19px] bg-[#c5d6ee] border border-[#8c9ccc] flex items-center justify-center"><svg class="w-[15px] h-[15px]" viewBox="0 0 15 15"><path d="M4 1h10v8M7 1v8M10.500 1v8M4 4.500h10" fill="none" stroke="#555"/><rect x="1" y="5" width="7" height="6" fill="#dde" stroke="#333" stroke-dasharray="1 1"/><path d="m8 12 3-3v2h4v2h-4v2z" fill="#4fa456"/></svg></div>
  <svg class="ml-auto w-[14px] h-[14px]" viewBox="0 0 14 14"><circle cx="7" cy="7" r="4" fill="none" stroke="#3f78b5" stroke-width="2.800"/><path d="M7 0v3M7 11v3M0 7h3M11 7h3M2 2l2 2M10 10l2 2M12 2l-2 2M4 10l-2 2" stroke="#3f78b5" stroke-width="2"/></svg>
  <svg class="ml-[3px] mr-[6px] w-[15px] h-[15px]" viewBox="0 0 15 15"><path d="M1 5V1h4M1 1l4 4M14 5V1h-4M14 1l-4 4M1 10v4h4M1 14l4-4M14 10v4h-4M14 14l-4-4" fill="none" stroke="#555"/></svg>
</div>

<!-- Format menu -->
<div class="absolute left-[184px] top-[40px] w-[193px] h-[350px] bg-[#f0f0f0] border border-[#a0a0a0] shadow-[2px_2px_3px_rgba(0,0,0,0.4)] pt-[1px] text-[11.300px] text-[#222]">
  <div class="absolute left-[27px] top-0 bottom-0 w-[1px] bg-[#e0e0e0]"></div>
  <div class="flex items-center h-[22px]"><svg class="ml-[7px] w-[16px] h-[16px]" viewBox="0 0 16 16"><use href="#layer"/></svg><span class="ml-[8px]"><span class="underline">С</span>лой...</span></div>
  <div class="flex items-center h-[22px] pl-[31px]"><span><span class="underline">Ц</span>вета...</span></div>
  <div class="flex items-center h-[22px] pl-[31px]"><span><span class="underline">Т</span>ипы линий...</span></div>
  <div class="flex items-center h-[22px] pl-[31px]"><span><span class="underline">В</span>еса линий...</span></div>
  <div class="ml-[29px] my-[1.750px] h-[2px] bg-[#e2e2e2]"></div>
  <div class="flex items-center h-[22px]"><svg class="ml-[7px] w-[16px] h-[16px]" viewBox="0 0 16 16"><use href="#txt"/></svg><span class="ml-[8px]"><span class="underline">С</span>тиль текста...</span></div>
  <div class="flex items-center h-[22px]"><svg class="ml-[7px] w-[16px] h-[16px]" viewBox="0 0 16 16"><use href="#dim"/></svg><span class="ml-[8px]"><span class="underline">Р</span>азмерные стили...</span></div>
  <div class="flex items-center h-[22px]"><svg class="ml-[7px] w-[16px] h-[16px]" viewBox="0 0 16 16"><use href="#tbl"/></svg><span class="ml-[8px]"><span class="underline">С</span>тили таблиц...</span></div>
  <div class="flex items-center h-[22px]"><svg class="ml-[7px] w-[16px] h-[16px]" viewBox="0 0 16 16"><use href="#mld"/></svg><span class="ml-[8px]">Стиль м<span class="underline">у</span>льтивыноски</span></div>
  <div class="flex items-center h-[22px] pl-[31px] text-[#aaa]"><span>С<span class="underline">т</span>или Печати...</span></div>
  <div class="flex items-center h-[22px] pl-[31px]"><span><span class="underline">О</span>тображение точек...</span></div>
  <div class="flex items-center h-[22px] pl-[31px]"><span>Стили <span class="underline">м</span>ультилиний...</span></div>
  <div class="ml-[29px] my-[1.750px] h-[2px] bg-[#e2e2e2]"></div>
  <div class="flex items-center h-[22px] pl-[31px]"><span><span class="underline">Е</span>диницы...</span></div>
  <div class="flex items-center h-[22px] pl-[31px]"><span><span class="underline">В</span>ысота</span></div>
  <div class="flex items-center h-[22px] pl-[31px]"><span><span class="underline">Л</span>имиты</span></div>
  <div class="ml-[29px] my-[1.750px] h-[2px] bg-[#e2e2e2]"></div>
  <div class="flex items-center h-[22px] pl-[31px]"><span><span class="underline">П</span>ереименовать...</span></div>
</div>
</body>
</html>
